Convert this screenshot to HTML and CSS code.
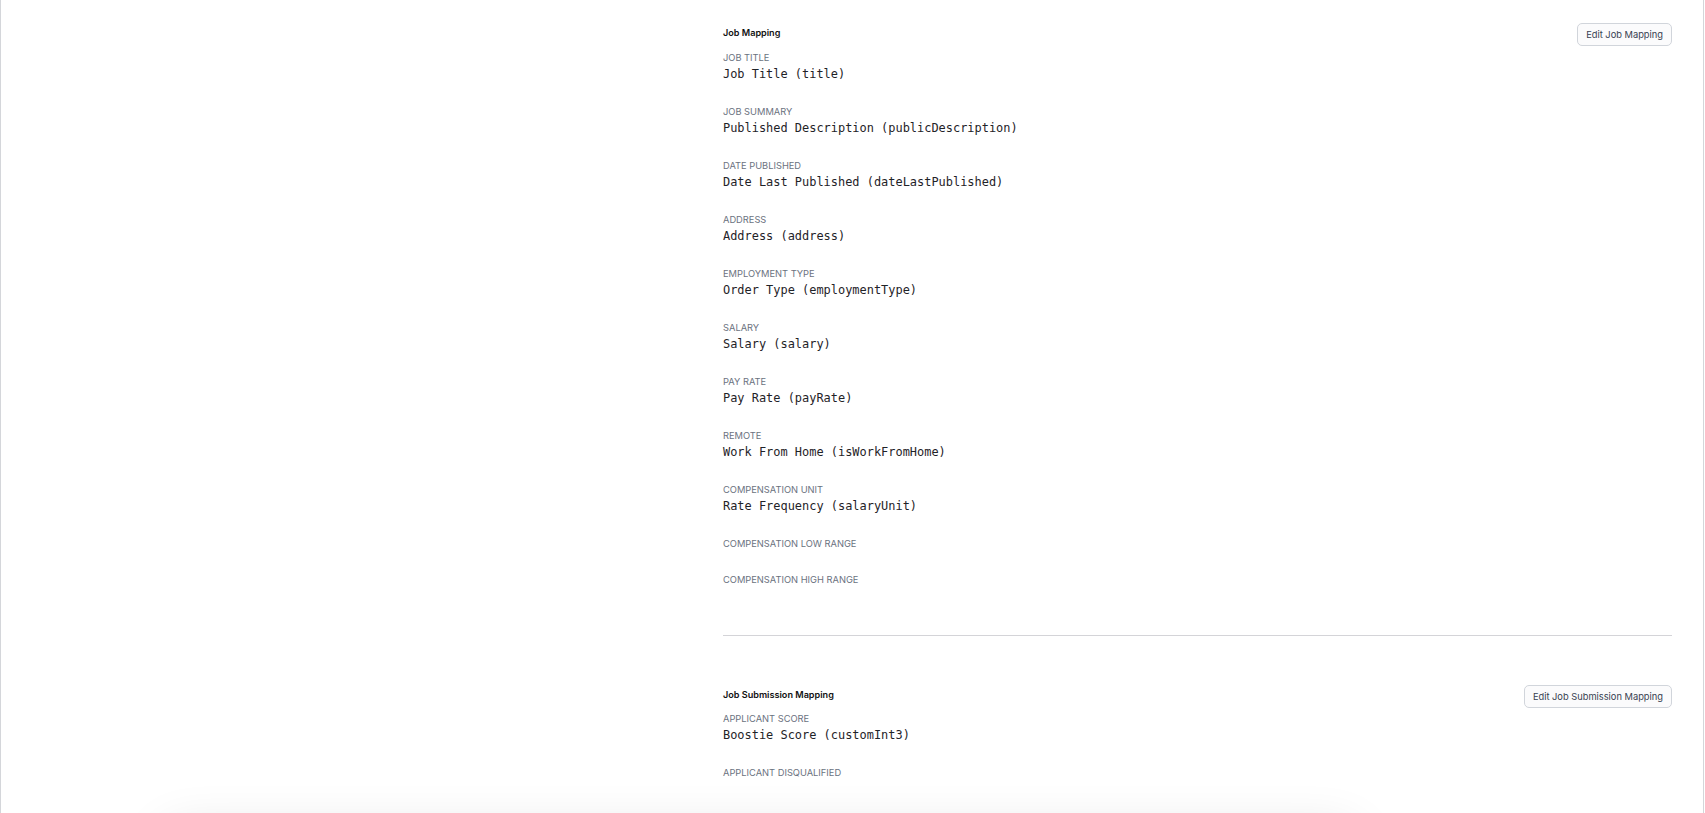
FILE: index.html
```html
<!DOCTYPE html>
<html>
<head>
    <title>Integration Settings - Field Mapping</title>
    <link rel="stylesheet" href="styles.css">
</head>
<body>
    <div class="frame">
        <div class="layout">
            <div class="side"></div>
            <div class="main">
                <section class="mapping">
                    <div class="mapping-head">
                        <h2>Job Mapping</h2>
                        <button class="button">Edit Job Mapping</button>
                    </div>
                    <dl class="fields">
                        <div class="field">
                            <dt>Job Title</dt>
                            <dd>Job Title (title)</dd>
                        </div>
                        <div class="field">
                            <dt>Job Summary</dt>
                            <dd>Published Description (publicDescription)</dd>
                        </div>
                        <div class="field">
                            <dt>Date Published</dt>
                            <dd>Date Last Published (dateLastPublished)</dd>
                        </div>
                        <div class="field">
                            <dt>Address</dt>
                            <dd>Address (address)</dd>
                        </div>
                        <div class="field">
                            <dt>Employment Type</dt>
                            <dd>Order Type (employmentType)</dd>
                        </div>
                        <div class="field">
                            <dt>Salary</dt>
                            <dd>Salary (salary)</dd>
                        </div>
                        <div class="field">
                            <dt>Pay Rate</dt>
                            <dd>Pay Rate (payRate)</dd>
                        </div>
                        <div class="field">
                            <dt>Remote</dt>
                            <dd>Work From Home (isWorkFromHome)</dd>
                        </div>
                        <div class="field">
                            <dt>Compensation Unit</dt>
                            <dd>Rate Frequency (salaryUnit)</dd>
                        </div>
                        <div class="field">
                            <dt>Compensation Low Range</dt>
                        </div>
                        <div class="field">
                            <dt>Compensation High Range</dt>
                        </div>
                    </dl>
                </section>

                <hr class="divider">

                <section class="mapping">
                    <div class="mapping-head">
                        <h2>Job Submission Mapping</h2>
                        <button class="button">Edit Job Submission Mapping</button>
                    </div>
                    <dl class="fields">
                        <div class="field">
                            <dt>Applicant Score</dt>
                            <dd>Boostie Score (customInt3)</dd>
                        </div>
                        <div class="field">
                            <dt>Applicant Disqualified</dt>
                        </div>
                    </dl>
                </section>
            </div>
        </div>
    </div>
    <div class="toolbar-shadow"></div>
</body>
</html>
```

FILE: styles.css
```css
body {
    font-family: Inter, "Noto Sans", sans-serif;
    margin: 0;
    background: #fff;
    color: #111827;
}
.frame {
    border-left: 1px solid #d4d6da;
    border-right: 1px solid #d4d6da;
    margin-right: 1px;
    min-height: 100vh;
    box-sizing: border-box;
}
.layout {
    display: grid;
    grid-template-columns: 722px 1fr;
    padding: 23px 31px 0 0;
}
.mapping-head {
    display: flex;
    justify-content: space-between;
    align-items: flex-start;
}
.mapping-head h2 {
    margin: 2px 0 0;
    font-size: 9.1px;
    line-height: 16px;
    font-weight: 600;
    color: #111;
}
.button {
    font-family: Inter, "Noto Sans", sans-serif;
    font-size: 9.3px;
    color: #374151;
    background: #fbfbfc;
    border: 1px solid #d1d5db;
    border-radius: 5px;
    height: 23px;
    padding: 0 8px;
    cursor: pointer;
}
.fields {
    margin: 5px 0 0;
    display: flex;
    flex-direction: column;
    gap: 22px;
}
.field dt {
    font-size: 9.3px;
    line-height: 14px;
    text-transform: uppercase;
    color: #6b7280;
}
.field dd {
    margin: 0;
    font-family: "DejaVu Sans Mono", "Liberation Mono", monospace;
    font-size: 11.95px;
    line-height: 18px;
    color: #1f2328;
}
.divider {
    border: none;
    border-top: 1px solid #d4d4d8;
    margin: 48px 0 49px;
}
.mapping + .divider + .mapping .fields {
    margin-top: 4px;
}
.toolbar-shadow {
    position: fixed;
    left: 165px;
    width: 1190px;
    top: 830px;
    height: 60px;
    border-radius: 12px;
    box-shadow: 0 0 50px rgba(0, 0, 0, 0.12);
}
```
